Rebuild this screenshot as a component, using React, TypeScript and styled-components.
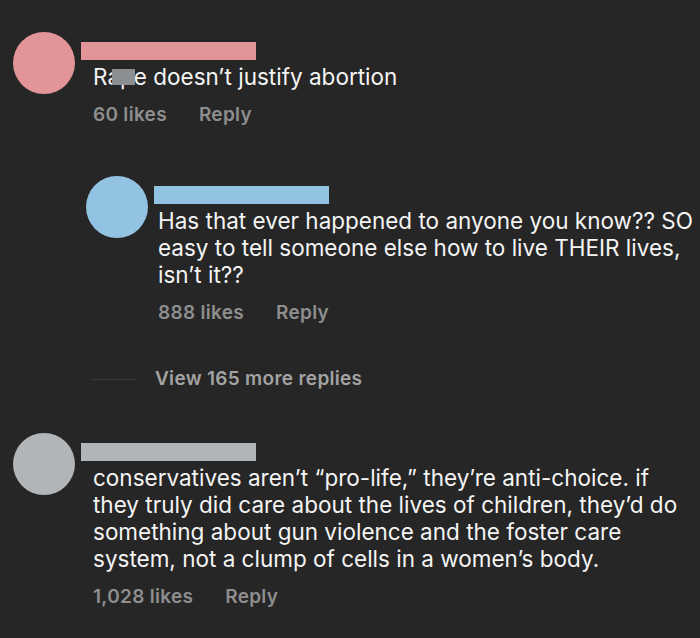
import React from "react";
import styled, { createGlobalStyle } from "styled-components";

const GlobalStyle = createGlobalStyle`
  html, body {
    margin: 0;
    padding: 0;
    background: #262626;
  }
  body {
    font-family: Inter, "Liberation Sans", Arial, sans-serif;
    -webkit-font-smoothing: antialiased;
  }
`;

const Thread = styled.div`
  display: flex;
  flex-direction: column;
  width: 700px;
  min-height: 638px;
  padding-top: 32px;
  box-sizing: border-box;
  background: #262626;
  overflow: hidden;
`;

const CommentRow = styled.div<{ $indent: number; $gapBelow: number }>`
  display: flex;
  align-items: flex-start;
  padding-left: ${(p) => p.$indent}px;
  padding-right: 3px;
  margin-bottom: ${(p) => p.$gapBelow}px;
`;

const Avatar = styled.div<{ $color: string }>`
  flex: 0 0 62px;
  width: 62px;
  height: 62px;
  border-radius: 50%;
  background: ${(p) => p.$color};
`;

const Body = styled.div<{ $offset: number }>`
  display: flex;
  flex-direction: column;
  flex: 1;
  min-width: 0;
  padding-left: ${(p) => p.$offset}px;
  padding-top: 10px;
`;

const NameBar = styled.div<{ $color: string; $shift: number }>`
  width: 175px;
  height: 18px;
  margin-left: ${(p) => -p.$shift}px;
  background: ${(p) => p.$color};
`;

const Text = styled.p`
  margin: 3px 0 0;
  color: #f4f4f4;
  font-size: 22.5px;
  line-height: 27px;
  font-weight: 400;
`;

const Redacted = styled.span`
  position: relative;
  &::after {
    content: "";
    position: absolute;
    left: 5px;
    right: -1px;
    top: 6px;
    height: 16px;
    background: #8c8f92;
  }
`;

const Actions = styled.div`
  display: flex;
  gap: 32px;
  margin-top: 13px;
  color: #8e8e8e;
  font-size: 19px;
  line-height: 24px;
  font-weight: 600;
  letter-spacing: 0.3px;
`;

const ViewMore = styled.div`
  display: flex;
  align-items: center;
  gap: 18px;
  padding-left: 93px;
  margin-top: 42px;
  margin-bottom: 42px;
  color: #a3a3a3;
  font-size: 19px;
  line-height: 24px;
  font-weight: 600;
  letter-spacing: 0.3px;
`;

const Rule = styled.span`
  width: 44px;
  height: 1px;
  background: #3e3e3e;
`;

type CommentProps = {
  indent: number;
  gapBelow: number;
  color: string;
  offset: number;
  shift: number;
  likes: string;
  children: React.ReactNode;
};

function Comment({ indent, gapBelow, color, offset, shift, likes, children }: CommentProps) {
  return (
    <CommentRow $indent={indent} $gapBelow={gapBelow}>
      <Avatar $color={color} />
      <Body $offset={offset}>
        <NameBar $color={color} $shift={shift} />
        <Text>{children}</Text>
        <Actions>
          <span>{likes}</span>
          <span>Reply</span>
        </Actions>
      </Body>
    </CommentRow>
  );
}

export default function App() {
  return (
    <>
      <GlobalStyle />
      <Thread>
        <Comment indent={13} gapBelow={49} color="#e29599" offset={18} shift={12} likes="60 likes">
          R<Redacted>ap</Redacted>e doesn’t justify abortion
        </Comment>
        <Comment indent={86} gapBelow={0} color="#93c3e3" offset={10} shift={4} likes="888 likes">
          Has that ever happened to anyone you know?? SO easy to tell someone else how to live THEIR lives, isn’t it??
        </Comment>
        <ViewMore>
          <Rule />
          <span>View 165 more replies</span>
        </ViewMore>
        <Comment indent={13} gapBelow={0} color="#b2b5b8" offset={18} shift={12} likes="1,028 likes">
          conservatives aren’t “pro-life,” they’re anti-choice. if they truly did care about the lives of children, they’d do something about gun violence and the foster care system, not a clump of cells in a women’s body.
        </Comment>
      </Thread>
    </>
  );
}
